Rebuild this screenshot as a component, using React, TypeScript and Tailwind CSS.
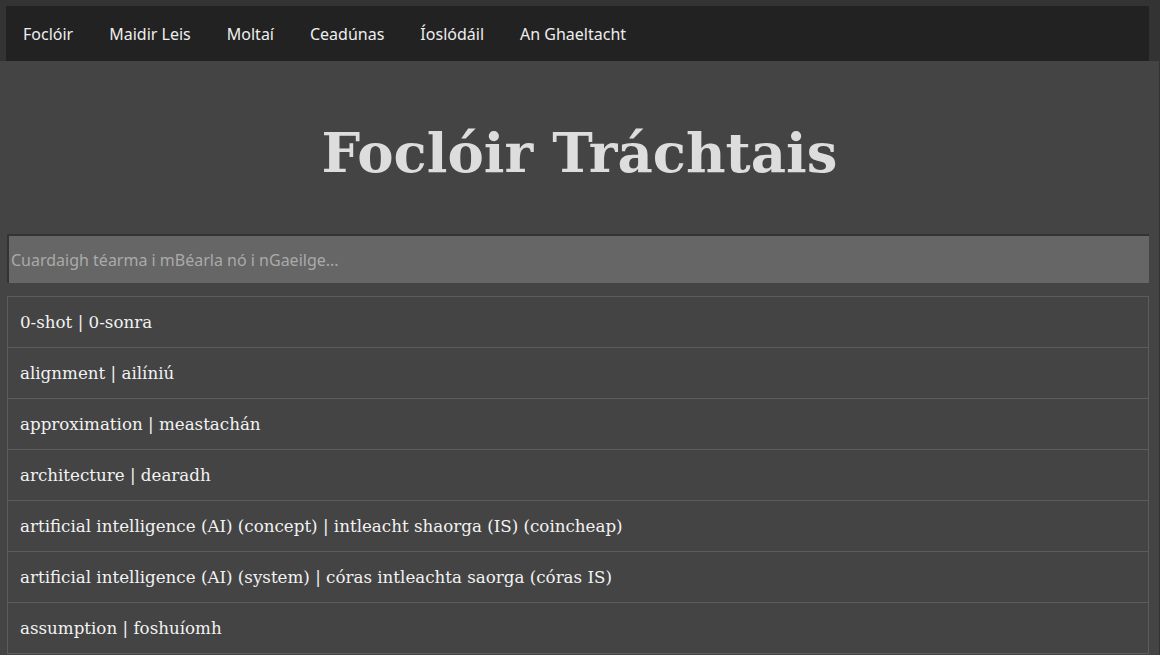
const navItems = ['Foclóir', 'Maidir Leis', 'Moltaí', 'Ceadúnas', 'Íoslódáil', 'An Ghaeltacht'];

const terms: [string, string][] = [
  ['0-shot', '0-sonra'],
  ['alignment', 'ailíniú'],
  ['approximation', 'meastachán'],
  ['architecture', 'dearadh'],
  ['artificial intelligence (AI) (concept)', 'intleacht shaorga (IS) (coincheap)'],
  ['artificial intelligence (AI) (system)', 'córas intleachta saorga (córas IS)'],
  ['assumption', 'foshuíomh'],
];

const sans = { fontFamily: '"Noto Sans", "Open Sans", sans-serif' };
const serif = { fontFamily: '"DejaVu Serif", "Liberation Serif", serif' };

export default function App() {
  return (
    <div className="h-[655px] overflow-hidden bg-[#333] pt-[6px]">
      <nav className="ml-[6px] mr-[11px] h-[55px] bg-[#222] flex items-center" style={sans}>
        {navItems.map(label => (
          <a key={label} className="px-[18px] first:-ml-px text-[16px] text-[#eee] cursor-pointer">
            {label}
          </a>
        ))}
      </nav>

      <main className="mr-px bg-[#444] h-full">
        <h1
          className="text-center text-[54.5px] font-bold text-[#ddd] pt-[46px] pb-[35px] leading-[92px]"
          style={serif}
        >
          Foclóir Tráchtais
        </h1>

        <div className="px-[7px]">
          <input
            type="text"
            placeholder="Cuardaigh téarma i mBéarla nó i nGaeilge..."
            className="block w-[1142px] h-[49px] bg-[#666] border-t-2 border-l-2 border-[#333] pl-[2px] text-[16px] text-[#eee] placeholder:text-[#aaa] outline-none"
            style={sans}
          />

          <ul className="mt-[13px] mr-[3px] border border-b-0 border-[#5c5c5c]" style={serif}>
            {terms.map(([en, ga]) => (
              <li
                key={en}
                className="h-[51px] flex items-center pt-px px-[12px] border-b border-[#5c5c5c] text-[16.7px] text-[#f2f2f2]"
              >
                {en} | {ga}
              </li>
            ))}
          </ul>
        </div>
      </main>
    </div>
  );
}
